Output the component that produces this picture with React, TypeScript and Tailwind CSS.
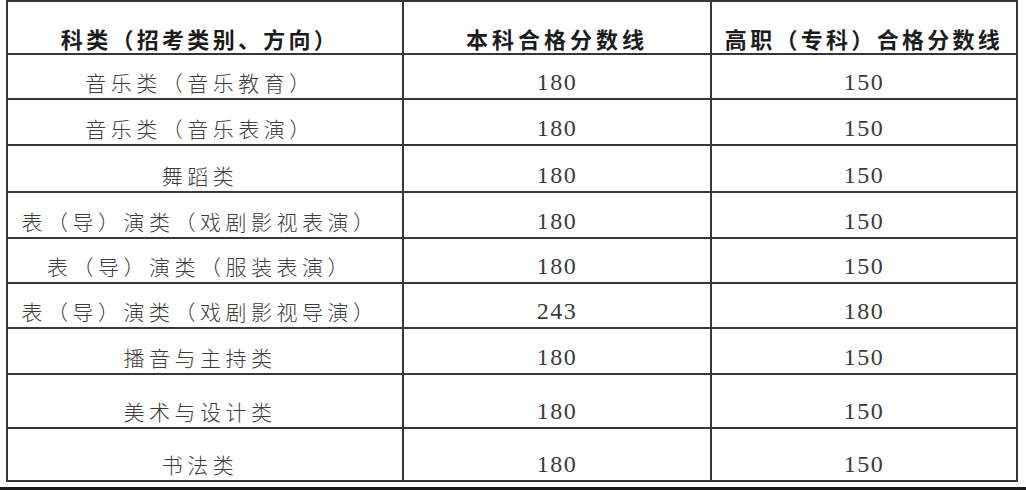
import React from 'react'

const rows = [
  { name: '音乐类（音乐教育）', bk: '180', gz: '150', h: 'h-[45px]' },
  { name: '音乐类（音乐表演）', bk: '180', gz: '150', h: 'h-[46px]' },
  { name: '舞蹈类', bk: '180', gz: '150', h: 'h-[47px]' },
  { name: '表（导）演类（戏剧影视表演）', bk: '180', gz: '150', h: 'h-[46px]' },
  { name: '表（导）演类（服装表演）', bk: '180', gz: '150', h: 'h-[45px]' },
  { name: '表（导）演类（戏剧影视导演）', bk: '243', gz: '180', h: 'h-[45px]' },
  { name: '播音与主持类', bk: '180', gz: '150', h: 'h-[46px]' },
  { name: '美术与设计类', bk: '180', gz: '150', h: 'h-[54px]' },
  { name: '书法类', bk: '180', gz: '150', h: 'h-[53px]' },
]

const cjk = "font-['Noto_Sans_CJK_SC',sans-serif]"
const num = "font-['Liberation_Serif','Times_New_Roman',serif]"

export default function App() {
  return (
    <div className="w-[1026px] h-[490px] bg-white flex flex-col overflow-hidden">
      <div className="ml-[6px] w-[1012px] border-l-2 border-t-2 border-[#363636]">
        {/* header */}
        <div className="grid grid-cols-[396px_308px_306px] h-[53px]">
          <div className={`flex items-end justify-center pb-[4px] pr-[10px] border-r-2 border-b-2 border-[#363636] ${cjk} text-[22px] font-bold leading-none tracking-[3.3px] text-[#1c1c1c]`}>
            科类（招考类别、方向）
          </div>
          <div className={`flex items-end justify-center pb-[4px] border-r-2 border-b-2 border-[#363636] ${cjk} text-[22px] font-bold leading-none tracking-[4px] text-[#1c1c1c]`}>
            本科合格分数线
          </div>
          <div className={`flex items-end justify-center pb-[4px] border-r-2 border-b-2 border-[#363636] ${cjk} text-[22px] font-bold leading-none tracking-[3.3px] text-[#1c1c1c]`}>
            高职（专科）合格分数线
          </div>
        </div>
        {rows.map((r, i) => (
          <div key={i} className={`grid grid-cols-[396px_308px_306px] ${r.h}`}>
            <div className={`flex items-end justify-center pb-[5px] pr-[10px] border-r-2 border-b-2 border-[#363636] ${cjk} text-[21px] font-light leading-none tracking-[4.5px] text-[#3c3c3c]`}>
              {r.name}
            </div>
            <div className={`flex items-end justify-center pb-[4px] border-r-2 border-b-2 border-[#363636] ${num} text-[24px] leading-none tracking-[1.5px] text-[#3a3a3a]`}>
              {r.bk}
            </div>
            <div className={`flex items-end justify-center pb-[4px] border-r-2 border-b-2 border-[#363636] ${num} text-[24px] leading-none tracking-[1.5px] text-[#3a3a3a]`}>
              {r.gz}
            </div>
          </div>
        ))}
      </div>
      <div className="flex-1" />
      <div className="h-[3px] bg-[#1a1a1a]" />
    </div>
  )
}
